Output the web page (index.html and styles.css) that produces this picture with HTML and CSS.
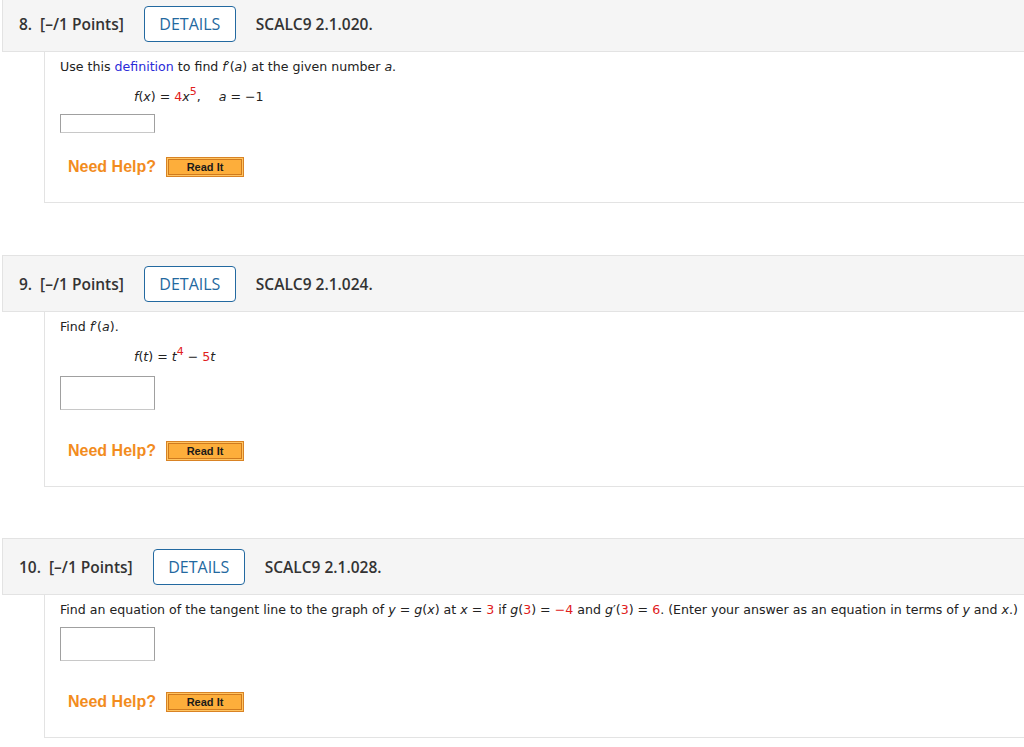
FILE: index.html
```html
<!DOCTYPE html>
<html>
<head>
<meta charset="utf-8">
<link rel="stylesheet" href="styles.css">
</head>
<body>
<div class="question first">
  <div class="q-header">
    <span class="q-num">8.</span>
    <span class="q-points">[–/1 Points]</span>
    <span class="details">DETAILS</span>
    <span class="q-code">SCALC9 2.1.020.</span>
  </div>
  <div class="q-body">
    <div class="prompt">Use this <span class="link">definition</span> to find <i>f</i>′(<i>a</i>) at the given number <i>a</i>.</div>
    <div class="formula"><i>f</i>(<i>x</i>) = <span class="red">4</span><i>x</i><sup class="red">5</sup>,<span class="sp"></span><i>a</i> = −1</div>
    <div class="answer small"></div>
    <div class="help short"><span class="need">Need Help?</span><span class="readit"><span class="readit-in">Read It</span></span></div>
  </div>
</div>

<div class="question">
  <div class="q-header">
    <span class="q-num">9.</span>
    <span class="q-points">[–/1 Points]</span>
    <span class="details">DETAILS</span>
    <span class="q-code">SCALC9 2.1.024.</span>
  </div>
  <div class="q-body">
    <div class="prompt">Find <i>f</i>′(<i>a</i>).</div>
    <div class="formula"><i>f</i>(<i>t</i>) = <i>t</i><sup class="red">4</sup> − <span class="red">5</span><i>t</i></div>
    <div class="answer"></div>
    <div class="help"><span class="need">Need Help?</span><span class="readit"><span class="readit-in">Read It</span></span></div>
  </div>
</div>

<div class="question">
  <div class="q-header">
    <span class="q-num">10.</span>
    <span class="q-points">[–/1 Points]</span>
    <span class="details">DETAILS</span>
    <span class="q-code">SCALC9 2.1.028.</span>
  </div>
  <div class="q-body">
    <div class="prompt">Find an equation of the tangent line to the graph of <i>y</i> = <i>g</i>(<i>x</i>) at <i>x</i> = <span class="red">3</span> if <i>g</i>(<span class="red">3</span>) = <span class="red">−4</span> and <i>g</i>′(<span class="red">3</span>) = <span class="red">6</span>. (Enter your answer as an equation in terms of <i>y</i> and <i>x</i>.)</div>
    <div class="answer tight"></div>
    <div class="help"><span class="need">Need Help?</span><span class="readit"><span class="readit-in">Read It</span></span></div>
  </div>
</div>
</body>
</html>
```

FILE: styles.css
```css
html, body {
  margin: 0;
  padding: 0;
  background: #fff;
  overflow: hidden;
}

.question {
  margin-bottom: 51px;
}

.question.first {
  margin-top: -5px;
  margin-bottom: 52px;
}

.q-header {
  margin-left: 2px;
  height: 55px;
  border: 1px solid #e3e3e3;
  border-right: none;
  background: #f5f5f5;
  display: flex;
  align-items: center;
  padding-left: 16px;
  font-family: "Open Sans", "Noto Sans", sans-serif;
  font-size: 15.5px;
  font-weight: 600;
  color: #333;
}

.q-num {
  margin-right: 8px;
}

.details {
  margin-left: 20px;
  margin-right: 20px;
  height: 34px;
  width: 90px;
  border: 1.5px solid #2369a0;
  border-radius: 4px;
  color: #2369a0;
  font-size: 16px;
  font-weight: 500;
  display: flex;
  align-items: center;
  justify-content: center;
  background: #fff;
}

.q-body {
  margin-left: 44px;
  border-left: 1px solid #e3e3e3;
  border-bottom: 1px solid #e3e3e3;
  padding: 7px 0 25px 15px;
  font-family: "DejaVu Sans", Verdana, sans-serif;
  font-size: 12.6px;
  color: #222;
}

.prompt {
  line-height: 16px;
  height: 16px;
  white-space: nowrap;
}

.link {
  color: #2a2ad8;
}

.red {
  color: #e0201c;
}

.formula {
  margin-top: 14px;
  margin-left: 74px;
  line-height: 16px;
  height: 16px;
}

.formula sup {
  line-height: 0;
  font-size: 11px;
  vertical-align: 6px;
}

.sp {
  display: inline-block;
  width: 18px;
}

.answer {
  margin-top: 11px;
  width: 93px;
  height: 32px;
  border: 1px solid #a0a0a0;
  border-bottom-color: #c8c8c8;
  background: #fff;
}

.answer.small {
  margin-top: 9px;
  height: 17px;
}

.answer.tight {
  margin-top: 9px;
}

.help {
  margin-top: 31px;
  margin-left: 8px;
  display: flex;
  align-items: center;
  height: 20px;
}

.help.short {
  margin-top: 24px;
}

.need {
  font-family: "Liberation Sans", Arial, sans-serif;
  font-weight: bold;
  font-size: 16px;
  color: #f28c1e;
  margin-right: 10px;
}

.readit {
  display: inline-block;
  border: 1px solid #d98324;
  padding: 1px;
  background: #ffc462;
  height: 16px;
  width: 74px;
}

.readit-in {
  display: flex;
  align-items: center;
  justify-content: center;
  height: 14px;
  border: 1px solid #cf7a1e;
  background: #fdae3b;
  font-family: "Liberation Sans", Arial, sans-serif;
  font-weight: bold;
  font-size: 11px;
  color: #1a1a1a;
}
```
